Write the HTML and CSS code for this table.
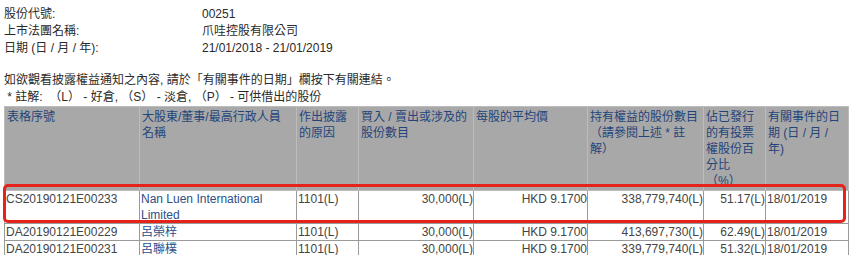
FILE: index.html
```html
<!DOCTYPE html>
<html lang="zh-Hant">
<head>
    <meta charset="UTF-8" />
    <title>權益披露</title>
    <link rel="stylesheet" href="styles.css">
</head>
<body>

    <!-- Stock info -->
    <div class="info">
        <span>股份代號:</span><span>00251</span>
        <span>上市法團名稱:</span><span>爪哇控股有限公司</span>
        <span>日期 (日 / 月 / 年):</span><span>21/01/2018 - 21/01/2019</span>
    </div>

    <!-- Notes -->
    <div class="notes">
        <p>如欲觀看披露權益通知之內容, 請於「有關事件的日期」欄按下有關連結。</p>
        <p>&nbsp;* 註解:&nbsp; （L） - 好倉, （S） - 淡倉, （P） - 可供借出的股份</p>
    </div>

    <!-- Disclosure table -->
    <div class="table-wrap">
        <table class="disclosure">
            <colgroup>
                <col style="width:135px">
                <col style="width:157px">
                <col style="width:62px">
                <col style="width:115px">
                <col style="width:114px">
                <col style="width:116px">
                <col style="width:62px">
                <col style="width:83px">
            </colgroup>
            <thead>
                <tr>
                    <th>表格序號</th>
                    <th>大股東/董事/最高行政人員<br>名稱</th>
                    <th>作出披露<br>的原因</th>
                    <th>買入 / 賣出或涉及的<br>股份數目</th>
                    <th>每股的平均價</th>
                    <th>持有權益的股份數目<br>（請參閱上述 * 註<br>解）</th>
                    <th>佔已發行<br>的有投票<br>權股份百<br>分比<br>（%）</th>
                    <th>有關事件的日<br>期 (日 / 月 /<br>年)</th>
                </tr>
            </thead>
            <tbody>
                <tr>
                    <td>CS20190121E00233</td>
                    <td class="name">Nan Luen International Limited</td>
                    <td>1101(L)</td>
                    <td class="num">30,000(L)</td>
                    <td class="num">HKD 9.1700</td>
                    <td class="num">338,779,740(L)</td>
                    <td class="num">51.17(L)</td>
                    <td>18/01/2019</td>
                </tr>
                <tr>
                    <td>DA20190121E00229</td>
                    <td class="name">呂榮梓</td>
                    <td>1101(L)</td>
                    <td class="num">30,000(L)</td>
                    <td class="num">HKD 9.1700</td>
                    <td class="num">413,697,730(L)</td>
                    <td class="num">62.49(L)</td>
                    <td>18/01/2019</td>
                </tr>
                <tr>
                    <td>DA20190121E00231</td>
                    <td class="name">呂聯樸</td>
                    <td>1101(L)</td>
                    <td class="num">30,000(L)</td>
                    <td class="num">HKD 9.1700</td>
                    <td class="num">339,779,740(L)</td>
                    <td class="num">51.32(L)</td>
                    <td>18/01/2019</td>
                </tr>
            </tbody>
        </table>
        <!-- red highlight around the first row -->
        <div class="highlight"></div>
    </div>

</body>
</html>
```

FILE: styles.css
```css
* {
    margin: 0;
    padding: 0;
    box-sizing: border-box;
}

body {
    font-family: 'Liberation Sans', Arial, 'Noto Sans CJK TC', sans-serif;
    font-size: 12px;
    color: #2a2a2a;
    background: #fff;
    padding: 6px 0 0 4px;
    width: 850px;
    overflow: hidden;
}

.info {
    display: grid;
    grid-template-columns: 198px auto;
    line-height: 17px;
}

.notes {
    margin-top: 15px;
    line-height: 17px;
}

.notes p {
    white-space: nowrap;
}

.table-wrap {
    position: relative;
    width: 844px;
}

.disclosure {
    width: 844px;
    table-layout: fixed;
    border-collapse: collapse;
}

.disclosure th {
    background: #a8a8a8;
    color: #23447a;
    font-weight: normal;
    text-align: left;
    vertical-align: top;
    line-height: 16px;
    padding: 2px 1px 1px 2px;
    border: 1px solid #bcbcbc;
    height: 84px;
}

.disclosure td {
    line-height: 16px;
    padding: 0 1px;
    vertical-align: top;
    border: 1px solid #9a9a9a;
    color: #444;
}

.disclosure td.num {
    text-align: right;
    padding-right: 0;
}

.disclosure td.name {
    color: #2c4f88;
}

.highlight {
    position: absolute;
    left: -1px;
    top: 78px;
    width: 843px;
    height: 39px;
    border: 3px solid #e5231b;
    border-radius: 5px;
}
```
